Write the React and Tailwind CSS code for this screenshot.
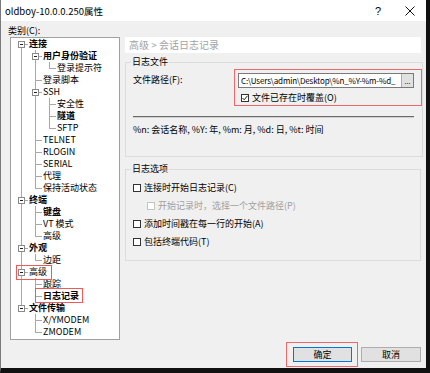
const font = "font-['Noto_Sans_CJK_SC','Microsoft_YaHei',sans-serif]";

const tree = [
  ["连接", ["boxFirst"], true],
  ["用户身份验证", ["pipe", "boxTee"], true],
  ["登录提示符", ["pipe", "pipe", "elbow"]],
  ["登录脚本", ["pipe", "tee"]],
  ["SSH", ["pipe", "boxTee"]],
  ["安全性", ["pipe", "pipe", "tee"]],
  ["隧道", ["pipe", "pipe", "tee"], true],
  ["SFTP", ["pipe", "pipe", "elbow"]],
  ["TELNET", ["pipe", "tee"]],
  ["RLOGIN", ["pipe", "tee"]],
  ["SERIAL", ["pipe", "tee"]],
  ["代理", ["pipe", "tee"]],
  ["保持活动状态", ["pipe", "elbow"]],
  ["终端", ["boxTee"], true],
  ["键盘", ["pipe", "tee"], true],
  ["VT 模式", ["pipe", "tee"]],
  ["高级", ["pipe", "elbow"]],
  ["外观", ["boxTee"], true],
  ["边距", ["pipe", "elbow"]],
  ["高级", ["boxTee"]],
  ["跟踪", ["pipe", "tee"]],
  ["日志记录", ["pipe", "elbow"], true],
  ["文件传输", ["boxElbow"], true],
  ["X/YMODEM", ["blank", "tee"]],
  ["ZMODEM", ["blank", "elbow"]],
];

const LINE = "#a8a8a8";

function TreeCell({ type }) {
  const up = type !== "blank" && type !== "boxFirst";
  const down = ["pipe", "tee", "boxTee", "boxFirst"].includes(type);
  const right = type !== "pipe" && type !== "blank";
  const box = type.startsWith("box");
  return (
    <svg width="14" height="12" shapeRendering="crispEdges" className="shrink-0">
      {up && <line x1="7.5" y1="0" x2="7.5" y2="6.5" stroke={LINE} />}
      {down && <line x1="7.5" y1="6" x2="7.5" y2="12" stroke={LINE} />}
      {right && <line x1="7.5" y1="6.5" x2="14" y2="6.5" stroke={LINE} />}
      {box && (
        <>
          <rect x="4.5" y="3.5" width="6" height="6" fill="#fff" stroke="#8a8a8a" />
          <line x1="6" y1="6.5" x2="9" y2="6.5" stroke="#222" />
        </>
      )}
    </svg>
  );
}

function CheckBox({ checked, disabled }) {
  return (
    <span
      className={`w-[8px] h-[8px] shrink-0 bg-white border ${
        disabled ? "border-[#c4c4c4]" : "border-[#333]"
      } flex items-center justify-center`}
    >
      {checked && (
        <svg width="6" height="6" viewBox="0 0 6 6">
          <polyline points="0.5,3 2.2,4.8 5.5,0.8" fill="none" stroke="#222" strokeWidth="1" />
        </svg>
      )}
    </span>
  );
}

const App = () => {
  return (
    <div
      className={`${font} w-[430px] h-[373px] bg-[#f0f0f0] text-black text-[9px] leading-[12px] flex flex-col border-l border-l-[#7a7a7a] border-r-[4px] border-r-[#111] border-b-[5px] border-b-[#111] overflow-hidden`}
    >
      {/* Title bar */}
      <div className="h-[21px] shrink-0 bg-white flex items-center justify-between pl-[4px] pr-[11px]">
        <span className="text-[9.5px] leading-[12px]">oldboy-10.0.0.250属性</span>
        <div className="flex items-center gap-[24px]">
          <span className="text-[11px] leading-[12px] font-['Liberation_Sans',sans-serif]">?</span>
          <svg width="10" height="10" viewBox="0 0 10 10">
            <path d="M0.5 0.5 L9.5 9.5 M9.5 0.5 L0.5 9.5" stroke="#111" strokeWidth="1" />
          </svg>
        </div>
      </div>

      {/* Main */}
      <div className="flex">
        {/* Category tree */}
        <div className="w-[124px] shrink-0 pt-[4px]">
          <div className="ml-[7px] h-[12px]">类别(C):</div>
          <div className="ml-[9px] w-[110px] h-[303px] bg-white border border-[#a0a0a0] relative pl-[3px]">
            {tree.map(([label, cells, bold], i) => (
              <div key={i} className="flex items-center h-[12px] whitespace-nowrap">
                {cells.map((c, j) => (
                  <TreeCell key={j} type={c} />
                ))}
                <span className={`ml-[1px] ${bold ? "font-bold" : ""}`}>{label}</span>
              </div>
            ))}
            <div className="absolute left-[5px] top-[227px] w-[36px] h-[15px] border border-[#ee5a5a]" />
            <div className="absolute left-[24px] top-[250px] w-[48px] h-[15px] border border-[#ee5a5a]" />
          </div>
        </div>

        {/* Right panel */}
        <div className="w-[296px] shrink-0 pt-[16px]">
          <div className="h-[16px] bg-white flex items-center pl-[4px] text-[10px] text-[#a3a3a3]">
            高级 &gt; 会话日志记录
          </div>

          <fieldset className="mt-[3px] border border-[#dcdcdc]">
            <legend className="ml-[5px] px-[1px] leading-[12px]">日志文件</legend>
            <div className="pl-[7px] pb-[20px]">
              <div className="flex items-start">
                <div className="w-[101px] shrink-0 mt-[6px]">文件路径(F):</div>
                <div className="w-[188px] shrink-0 mt-[1px] border border-[#ee6a6a] pl-[3px] pt-[3px] pb-[3px]">
                  <div className="w-[176px] h-[15px] bg-white border border-[#7a7a7a] flex">
                    <div className="flex-1 overflow-hidden whitespace-nowrap pl-[2px] leading-[13px] text-[8px] tracking-[-0.15px]">
                      C:\Users\admin\Desktop\%n_%Y-%m-%d_
                    </div>
                    <div className="w-[12px] shrink-0 h-full bg-[#e1e1e1] border-l border-[#adadad] flex items-center justify-center text-[7px] leading-[8px]">
                      ...
                    </div>
                  </div>
                  <div className="mt-[6px] pl-[3px] flex items-center h-[8px]">
                    <CheckBox checked />
                    <span className="ml-[3px] whitespace-nowrap">文件已存在时覆盖(O)</span>
                  </div>
                </div>
              </div>
              <div className="mt-[10px] w-[281px] border-t border-t-[#6a6a6a] border-b border-b-[#d0d0d0]" />
              <div className="mt-[6px] whitespace-nowrap">
                %n: 会话名称, %Y: 年, %m: 月, %d: 日, %t: 时间
              </div>
            </div>
          </fieldset>

          <fieldset className="mt-[6px] border border-[#dcdcdc]">
            <legend className="ml-[5px] px-[1px] leading-[12px]">日志选项</legend>
            <div className="pl-[7px] pt-[4px] pb-[9px]">
              <div className="h-[18px] flex items-center">
                <CheckBox />
                <span className="ml-[3px]">连接时开始日志记录(C)</span>
              </div>
              <div className="h-[18px] flex items-center pl-[14px] text-[#a0a0a0]">
                <CheckBox disabled />
                <span className="ml-[3px]">开始记录时，选择一个文件路径(P)</span>
              </div>
              <div className="h-[18px] flex items-center">
                <CheckBox />
                <span className="ml-[3px]">添加时间戳在每一行的开始(A)</span>
              </div>
              <div className="h-[18px] flex items-center">
                <CheckBox />
                <span className="ml-[3px]">包括终端代码(T)</span>
              </div>
            </div>
          </fieldset>
        </div>
      </div>

      {/* Buttons */}
      <div className="mt-[2px] flex justify-end items-center pr-[5px]">
        <div className="border border-[#ee6a6a] pl-[6px] pr-[5px] py-[4px]">
          <button className="w-[59px] h-[15px] bg-[#e1e1e1] border border-[#0078d7] flex items-center justify-center">
            确定
          </button>
        </div>
        <button className="ml-[3px] w-[60px] h-[15px] bg-[#e1e1e1] border border-[#adadad] flex items-center justify-center">
          取消
        </button>
      </div>
    </div>
  );
};

export default App;
